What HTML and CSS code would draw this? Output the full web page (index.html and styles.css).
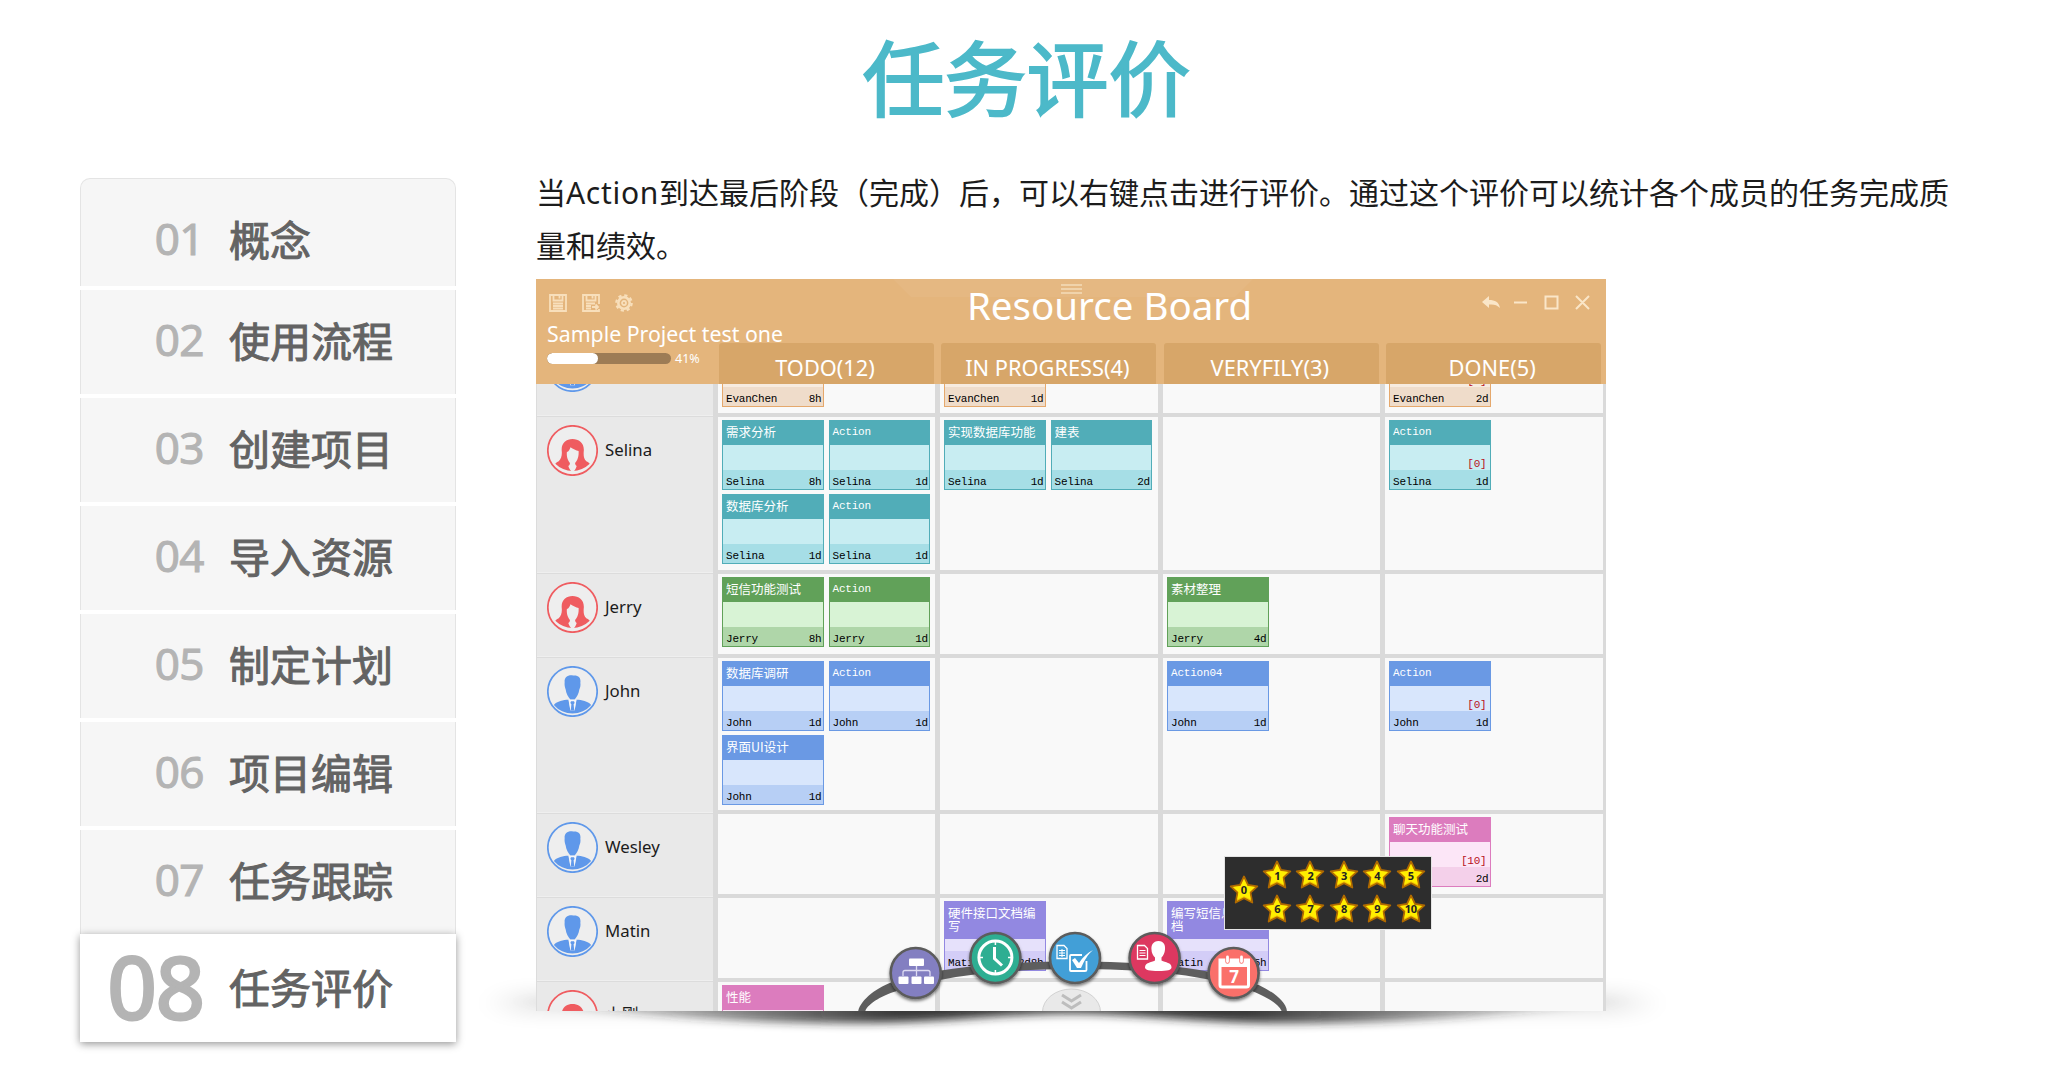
FILE: index.html
```html
<!DOCTYPE html>
<html lang="zh-CN">
<head>
<meta charset="utf-8">
<title>任务评价</title>
<link rel="stylesheet" href="styles.css">
</head>
<body>
<svg class="defs" width="0" height="0" aria-hidden="true">
  <symbol id="man" viewBox="0 0 50 50">
    <circle cx="25" cy="25" r="24.2" fill="#eeeeee" stroke="#5f98ea" stroke-width="1.7"/>
    <path d="M17.300 16C16.800 11 20.500 8.600 25.500 9.300c4.500-.6 8.200 1.700 7.200 7.200.5 3-.4 5-1 6.500-.5 4-2.600 7.500-4.600 9.800h-4.200c-2-2.300-4.100-5.800-4.600-9.800-.8-2-1.300-4.500-1-7z" fill="#5f98ea"/>
    <path d="M21 33.200l1.900 10.300 1.300-6-1.200-2h4l-1.200 2 1.300 6L29 33.200c5 .2 11 1.300 14.300 5A24 24 0 0 1 6.700 38.200C10 34.500 16 33.400 21 33.200z" fill="#5f98ea"/>
    <path d="M21.300 33.200l1.700 10.500h4l1.700-10.500z" fill="#f4f6fa"/>
    <path d="M23.500 34.500h3l.6 1.700-1 1.300.6 6.200h-3.400l.6-6.200-1-1.300z" fill="#5f98ea"/>
  </symbol>
  <symbol id="woman" viewBox="0 0 50 50">
    <circle cx="25" cy="25" r="24.200" fill="#eeeeee" stroke="#ef5c60" stroke-width="1.700"/>
    <path d="M14.500 26C13.500 18 18.500 13.700 25 13.700S37 18 36 26c-.3 4 .2 8 2.500 9.500 1.500.4 2.500 1.200 3.400 2.600A24 24 0 0 1 8.100 38.100c1-1.400 2-2.200 3.400-2.600 2.500-2.500 3.300-5.500 3-9.500z" fill="#ef5c60"/>
    <path d="M19.500 26.500c1.700-.5 3-2.500 3.500-4.700 2.500 1.700 5.500 3.200 8 3.700.3 5-1 9.500-3.500 11.700.2 1.600.7 2.300 1.600 3-.7 2.600-2.300 5.300-4 6.300-1.700-1-3.500-3.700-4.200-6.300 1-.7 1.500-1.400 1.600-3-2.200-2.200-3.500-6.700-3-10.700z" fill="#eeeeee"/>
  </symbol>
  <symbol id="star" viewBox="0 0 30 30">
    <path d="M15 1.500l4 8.500 9.300 1.300-6.800 6.400 1.800 9.800L15 23.300l-8.300 4.200 1.800-9.800-6.800-6.400L11 10z" fill="#f3c500" stroke="#b06a00" stroke-width="1.800" stroke-linejoin="round"/>
    <path d="M15 4l3.400 7 7.400 1-5.300 5 1.200 7.600-6.700-3.400-6.700 3.400L9.500 17l-5.300-5 7.400-1z" fill="#ffee00"/>
  </symbol>
</svg>

<h1 class="title">任务评价</h1>

<div class="page">
  <nav class="menu">
    <div class="item"><span class="num">01</span><span>概念</span></div>
    <div class="item"><span class="num">02</span><span>使用流程</span></div>
    <div class="item"><span class="num">03</span><span>创建项目</span></div>
    <div class="item"><span class="num">04</span><span>导入资源</span></div>
    <div class="item"><span class="num">05</span><span>制定计划</span></div>
    <div class="item"><span class="num">06</span><span>项目编辑</span></div>
    <div class="item"><span class="num">07</span><span>任务跟踪</span></div>
    <div class="item active"><span class="num">08</span><span>任务评价</span></div>
  </nav>

  <main class="content">
    <p class="intro">当<span class="latin">Action</span>到达最后阶段<span class="paren">（</span>完成<span class="paren">）</span>后，可以右键点击进行评价。通过这个评价可以统计各个成员的任务完成质量和绩效。</p>

    <div class="stage">
      <svg class="shadow" width="1230" height="110" viewBox="460 950 1230 110">
        <defs>
          <filter id="soft" x="-10%" y="-60%" width="120%" height="220%"><feGaussianBlur stdDeviation="14 4.500"/></filter>
          <filter id="faint" x="-20%" y="-100%" width="140%" height="300%"><feGaussianBlur stdDeviation="20 9"/></filter>
          <linearGradient id="fade"><stop offset="0" stop-color="#333" stop-opacity=".04"/><stop offset=".34" stop-color="#222" stop-opacity=".9"/><stop offset=".66" stop-color="#222" stop-opacity=".9"/><stop offset="1" stop-color="#333" stop-opacity=".04"/></linearGradient>
        </defs>
        <path d="M510 992H1635V1014H510z" fill="#000" opacity=".09" filter="url(#faint)"/>
        <path d="M520 1000C640 1016 760 1025 880 1023 960 1021 1010 1013 1071 1013S1180 1021 1262 1023C1380 1025 1500 1016 1622 1000z" fill="url(#fade)" filter="url(#soft)"/>
      </svg>

      <section class="board">
        <header class="top">
          <svg class="notch" width="360" height="18" viewBox="0 0 360 18"><path d="M0 0H360L342 18H18z" fill="#fff" opacity=".05"/><path d="M168 6h21M168 10h21M168 14h21" stroke="#f3dcb9" stroke-width="1.300"/></svg>
          <div class="project">
            <div class="tools">
              <svg width="18" height="18" viewBox="0 0 18 18" fill="none" stroke="#f8dfbb" stroke-width="1.800"><path d="M1 1h16v16H1zM4.500 1v5.500h9V1M10.500 1.500v3M4 9.500h10M4 12h10M4 14.500h10"/></svg>
              <svg width="18" height="18" viewBox="0 0 18 18" fill="none" stroke="#f8dfbb" stroke-width="1.800"><path d="M17 10V1H1v16h16v-2M4.500 1v5.500h9V1M10.500 1.500v3M4 9.500h9M4 12h5M4 14.500h5M10 13h6M13.500 10.500L16 13l-2.500 2.500"/></svg>
              <svg width="18" height="18" viewBox="0 0 18 18" fill="none" stroke="#f8dfbb"><circle cx="9" cy="9" r="5.700" stroke-width="2.600"/><circle cx="9" cy="9" r="7.700" stroke-width="2.200" stroke-dasharray="3.200 2.850"/><circle cx="9" cy="9" r="2" stroke-width="1.800"/></svg>
            </div>
            <div class="name">Sample Project test one</div>
            <div class="progress"><span class="bar"><span class="fill" style="width:41%"></span></span><span class="pct">41%</span></div>
          </div>
          <h2 class="heading">Resource Board</h2>
          <svg class="winctl" width="110" height="18" viewBox="0 0 110 18" fill="none" stroke="#fae6c8" stroke-width="2"><path d="M0 8l7-6v4c6 0 10 2 11 8-3-3-6-4-11-3.500V14z" fill="#fae6c8" stroke="none"/><path d="M32 8.500h13M63.500 2.500h12v12h-12zM94 2l13 13M107 2L94 15"/></svg>
          <div class="tabs">
            <div class="tab">TODO(12)</div><div class="tab">IN PROGRESS(4)</div><div class="tab">VERYFILY(3)</div><div class="tab">DONE(5)</div>
          </div>
        </header>

        <div class="grid">
          <div class="who cut"><svg class="avatar"><use href="#man"/></svg></div>
          <div class="cell cut"><div class="card orange"><div class="body"></div><div class="foot"><span>EvanChen</span><span>8h</span></div></div></div>
          <div class="cell cut"><div class="card orange"><div class="body"></div><div class="foot"><span>EvanChen</span><span>1d</span></div></div></div>
          <div class="cell cut"></div>
          <div class="cell cut"><div class="card orange"><div class="body">[4]</div><div class="foot"><span>EvanChen</span><span>2d</span></div></div></div>

          <div class="who"><svg class="avatar"><use href="#woman"/></svg><span>Selina</span></div>
          <div class="cell">
            <div class="card teal"><div class="head zh">需求分析</div><div class="body"></div><div class="foot"><span>Selina</span><span>8h</span></div></div>
            <div class="card teal"><div class="head">Action</div><div class="body"></div><div class="foot"><span>Selina</span><span>1d</span></div></div>
            <div class="card teal"><div class="head zh">数据库分析</div><div class="body"></div><div class="foot"><span>Selina</span><span>1d</span></div></div>
            <div class="card teal"><div class="head">Action</div><div class="body"></div><div class="foot"><span>Selina</span><span>1d</span></div></div>
          </div>
          <div class="cell">
            <div class="card teal"><div class="head zh">实现数据库功能</div><div class="body"></div><div class="foot"><span>Selina</span><span>1d</span></div></div>
            <div class="card teal"><div class="head zh">建表</div><div class="body"></div><div class="foot"><span>Selina</span><span>2d</span></div></div>
          </div>
          <div class="cell"></div>
          <div class="cell"><div class="card teal"><div class="head">Action</div><div class="body">[0]</div><div class="foot"><span>Selina</span><span>1d</span></div></div></div>

          <div class="who"><svg class="avatar"><use href="#woman"/></svg><span>Jerry</span></div>
          <div class="cell">
            <div class="card green"><div class="head zh">短信功能测试</div><div class="body"></div><div class="foot"><span>Jerry</span><span>8h</span></div></div>
            <div class="card green"><div class="head">Action</div><div class="body"></div><div class="foot"><span>Jerry</span><span>1d</span></div></div>
          </div>
          <div class="cell"></div>
          <div class="cell"><div class="card green"><div class="head zh">素材整理</div><div class="body"></div><div class="foot"><span>Jerry</span><span>4d</span></div></div></div>
          <div class="cell"></div>

          <div class="who"><svg class="avatar"><use href="#man"/></svg><span>John</span></div>
          <div class="cell">
            <div class="card blue"><div class="head zh">数据库调研</div><div class="body"></div><div class="foot"><span>John</span><span>1d</span></div></div>
            <div class="card blue"><div class="head">Action</div><div class="body"></div><div class="foot"><span>John</span><span>1d</span></div></div>
            <div class="card blue"><div class="head zh">界面UI设计</div><div class="body"></div><div class="foot"><span>John</span><span>1d</span></div></div>
          </div>
          <div class="cell"></div>
          <div class="cell"><div class="card blue"><div class="head">Action04</div><div class="body"></div><div class="foot"><span>John</span><span>1d</span></div></div></div>
          <div class="cell"><div class="card blue"><div class="head">Action</div><div class="body">[0]</div><div class="foot"><span>John</span><span>1d</span></div></div></div>

          <div class="who"><svg class="avatar"><use href="#man"/></svg><span>Wesley</span></div>
          <div class="cell"></div>
          <div class="cell"></div>
          <div class="cell"></div>
          <div class="cell"><div class="card pink"><div class="head zh">聊天功能测试</div><div class="body">[10]</div><div class="foot"><span></span><span>2d</span></div></div></div>

          <div class="who"><svg class="avatar"><use href="#man"/></svg><span>Matin</span></div>
          <div class="cell"></div>
          <div class="cell"><div class="card violet tall"><div class="head zh">硬件接口文档编写</div><div class="body"></div><div class="foot"><span>Matin</span><span>2d8h</span></div></div></div>
          <div class="cell"><div class="card violet tall"><div class="head zh">编写短信息的文档</div><div class="body"></div><div class="foot"><span>Matin</span><span>5h</span></div></div></div>
          <div class="cell"></div>

          <div class="who"><svg class="avatar"><use href="#woman"/></svg><span>小刚</span></div>
          <div class="cell"><div class="card pink"><div class="head zh">性能</div><div class="body"></div><div class="foot"></div></div></div>
          <div class="cell"></div>
          <div class="cell"></div>
          <div class="cell"></div>
        </div>

        <svg class="dock" width="450" height="86" viewBox="850 925 450 86">
          <defs><filter id="drop" x="-30%" y="-30%" width="160%" height="160%"><feDropShadow dx="0" dy="2" stdDeviation="1.500" flood-color="#000" flood-opacity=".5"/></filter></defs>
          <ellipse cx="1071.500" cy="1012" rx="29" ry="23" fill="#e9e9e9" stroke="#d2d2d2"/>
          <path d="M1062 995l9.500 6 9.500-6M1062 1002l9.500 6 9.500-6" fill="none" stroke="#bdbdbd" stroke-width="3"/>
          <path d="M858 1012C860 1000 877 987 895 981 945 966 1010 961.500 1075 961.500S1195 966 1245 980C1266 986 1287 1000 1287 1012H1282C1279 1003 1262 994 1243 988 1195 973.500 1140 969 1075 969S950 974.500 900 990C882 995 867 1004 865 1012z" fill="#5e5e5e"/>
          <g stroke="#5b5b5b" stroke-width="2.600" filter="url(#drop)">
            <circle cx="915.700" cy="973" r="25" fill="#837fc1"/><circle cx="995.400" cy="958" r="25" fill="#2fae92"/><circle cx="1075" cy="958" r="25" fill="#429fd7"/><circle cx="1154.600" cy="958" r="25" fill="#dd3860"/><circle cx="1233.600" cy="973" r="25" fill="#fa706b"/>
          </g>
          <g fill="#fff"><rect x="909" y="958.500" width="15" height="7.500" rx="1"/><rect x="898.500" y="976.500" width="10" height="7.500" rx="1"/><rect x="911.500" y="976.500" width="10" height="7.500" rx="1"/><rect x="924" y="976.500" width="10" height="7.500" rx="1"/></g>
          <path d="M903 976v-3.500q0-2 2-2h23q2 0 2 2v3.500M916.500 966v10" fill="none" stroke="#dedcf2" stroke-width="1.300"/>
          <circle cx="995.400" cy="957.500" r="16.500" fill="none" stroke="#fff" stroke-width="3"/>
          <path d="M995.400 941v4M995.400 970v4M979 957.500h4M1008 957.500h4" stroke="#fff" stroke-width="1.500"/>
          <path d="M994.500 947v11.500l7.500 7" fill="none" stroke="#fff" stroke-width="3"/>
          <g fill="none" stroke="#fff"><path d="M1057 945.500h7l3 3v10h-10z" stroke-width="1.300"/><path d="M1059 950.500h6M1059 953h6M1059 955.500h6M1062 949v8" stroke-width="1"/><path d="M1082 955h-11q-1 0-1 1v14q0 1 1 1h14q1.500 0 1.500-1v-9" stroke-width="1.800"/></g>
          <path d="M1072 960l3-2 4 5c4-6 8-10 14-13-5 4-9 11-12 18h-4z" fill="#fff"/>
          <g fill="none" stroke="#fff"><path d="M1137.500 945.500h7l3 3v10.500h-10z" stroke-width="1.300"/><path d="M1139.500 950.500h6M1139.500 953h6M1139.500 955.500h6" stroke-width="1"/></g>
          <path d="M1158.500 941c5.500 0 7 4.500 6.500 8.500-.3 3.500-1.500 6-3.500 8v3c4 2 10 2 10 7 0 2.500-4 3.500-13 3.500s-13.500-1-13.500-3.500c0-5 6-5 10-7v-3c-2-2-3.500-4.500-3.500-8-.5-4 1.500-8.500 7-8.500z" fill="#fff"/>
          <path d="M1220 960h28.500v25q0 2-2 2H1222q-2 0-2-2z" fill="none" stroke="#fff" stroke-width="3"/><path d="M1219 959h31v8h-31z" fill="#fff"/><path d="M1227.500 957.500v4M1241.500 957.500v4" stroke="#fa706b" stroke-width="4.400" stroke-linecap="round"/><path d="M1227.500 957v4.500M1241.500 957v4.500" stroke="#fff" stroke-width="2.800" stroke-linecap="round"/>
          <text x="1234" y="983" text-anchor="middle" class="day">7</text>
        </svg>

        <div class="rating">
          <div class="star zero"><svg><use href="#star"/></svg><b>0</b></div>
          <div class="star"><svg><use href="#star"/></svg><b>1</b></div>
          <div class="star"><svg><use href="#star"/></svg><b>2</b></div>
          <div class="star"><svg><use href="#star"/></svg><b>3</b></div>
          <div class="star"><svg><use href="#star"/></svg><b>4</b></div>
          <div class="star"><svg><use href="#star"/></svg><b>5</b></div>
          <div class="star"><svg><use href="#star"/></svg><b>6</b></div>
          <div class="star"><svg><use href="#star"/></svg><b>7</b></div>
          <div class="star"><svg><use href="#star"/></svg><b>8</b></div>
          <div class="star"><svg><use href="#star"/></svg><b>9</b></div>
          <div class="star"><svg><use href="#star"/></svg><b>10</b></div>
        </div>
      </section>
    </div>
  </main>
</div>
</body>
</html>
```

FILE: styles.css
```css
* { box-sizing: border-box; }
body {
  margin: 0;
  width: 2048px;
  height: 1080px;
  overflow: hidden;
  background: #fff;
  font-family: "Noto Sans", "Noto Sans CJK SC", sans-serif;
}
.defs { display: block; height: 0; }
.title {
  margin: 0;
  height: 167px;
  padding: 15px 0 0 5px;
  text-align: center;
  font: 400 82px/120px "Noto Sans CJK SC", sans-serif;
  color: #4cb9c9;
  -webkit-text-stroke: 2px #4cb9c9;
}
.page { display: flex; gap: 80px; padding-left: 80px; }

.menu { width: 376px; padding-top: 11px; display: flex; flex-direction: column; gap: 4px; }
.item {
  height: 104px;
  padding-bottom: 6px;
  display: flex;
  align-items: center;
  border: solid #e4e4e4;
  border-width: 0 1px;
  background: #f6f6f6;
  color: #636363;
  font: 400 41px/1 "Noto Sans CJK SC", sans-serif;
  -webkit-text-stroke: 1px #636363;
}
.item:first-child { height: 108px; padding-top: 17px; border-top-width: 1px; border-radius: 10px 10px 0 0; }
.num {
  width: 148px;
  padding-right: 25px;
  text-align: right;
  color: #b4b4b4;
  font: 400 44px/1 "Noto Sans", sans-serif;
  letter-spacing: -.5px;
  -webkit-text-stroke: 1px #b4b4b4;
}
.item.active {
  height: 108px;
  margin-top: -4px;
  padding-bottom: 4px;
  background: #fff;
  border-color: #fff;
  box-shadow: 0 2px 8px rgba(0, 0, 0, .42);
}
.active .num { font-size: 86px; letter-spacing: -1px; -webkit-text-stroke: 3px #b4b4b4; }

.content { width: 1440px; }
.intro {
  margin: 0;
  height: 112px;
  font: 400 30px/53px "Noto Sans CJK SC", sans-serif;
  color: #1c1c1c;
  position: relative;
  top: -2px;
}
.latin { font-family: "Noto Sans", sans-serif; letter-spacing: .7px; line-height: 1; }
.paren { font-family: "Noto Sans CJK TC", sans-serif; line-height: 1; }

.stage { position: relative; width: 1070px; }
.shadow { position: absolute; left: -76px; top: 671px; }
.board { position: relative; width: 1070px; height: 732px; overflow: hidden; background: #dadada; }

.top {
  position: relative;
  height: 105px;
  display: grid;
  grid-template: 64px 41px / 183px 1fr 127px;
  background: #e4b57c;
  color: #fff;
}
.notch { position: absolute; left: 357px; top: 0; }
.project { grid-area: 1 / 1 / 3 / 2; padding: 15px 0 0 11px; white-space: nowrap; position: relative; z-index: 1; }
.tools { display: flex; gap: 15px; padding-left: 2px; height: 18px; }
.name { margin-top: 8px; font-size: 21.3px; line-height: 27px; }
.progress { display: flex; align-items: center; gap: 4px; height: 11px; margin-top: 6px; }
.bar { width: 124px; height: 11px; border-radius: 6px; background: #9d7c55; overflow: hidden; }
.fill { display: block; height: 100%; border-radius: 6px; background: #fff; }
.pct { font-size: 12.5px; line-height: 11px; }
.heading {
  grid-area: 1 / 2 / 2 / 3;
  justify-self: center;
  margin: 0 0 0 21px;
  font-size: 38.5px;
  font-weight: 400;
  line-height: 53px;
  white-space: nowrap;
}
.winctl { grid-area: 1 / 3 / 2 / 4; margin-top: 15px; margin-left: 3px; }
.tabs { grid-area: 2 / 2 / 3 / 4; display: grid; grid-template: 41px / repeat(4, 215px); gap: 7.4px; }
.tab {
  padding-right: 3px;
  border-radius: 3px 3px 0 0;
  background: #d7a669;
  text-align: center;
  font-size: 21.8px;
  line-height: 49px;
}

.grid {
  display: grid;
  grid-template: 29px 153px 80px 152px 80px 80px 29px / 177px 217px 218px 217px 218px;
  gap: 4px 5px;
}
.who {
  display: flex;
  align-items: flex-start;
  gap: 7px;
  margin-bottom: -4px;
  padding: 8px 0 0 11px;
  background: #e9e9e9;
  border: solid #dcdcdc;
  border-width: 0 0 1px 1px;
  box-shadow: inset 0 -1px #efefef;
  color: #1b1b1b;
  font-size: 16.8px;
  line-height: 49px;
  overflow: hidden;
}
.who.cut { align-items: flex-end; padding: 0 0 24px 11px; }
.avatar { width: 51px; height: 51px; margin-left: -1px; flex: none; }
.cell {
  display: flex;
  flex-wrap: wrap;
  align-content: flex-start;
  gap: 4px 5px;
  padding: 3px 0 0 4px;
  background: #f9f9f9;
  overflow: hidden;
}
.cell.cut { align-content: flex-end; padding: 0 0 6px 4px; }

.card {
  width: 101.5px;
  height: 70px;
  display: flex;
  flex-direction: column;
  border: 1px solid var(--head);
  background: var(--body);
  color: #000;
  font: 11px/12px "Liberation Mono", monospace;
  letter-spacing: -.2px;
}
.cut .card { height: 45px; border-top: 0; }
.head { height: 24px; padding: 5px 3px 0; background: var(--head); color: #fff; }
.head.zh { padding: 4px 0 0 3px; font: 12.5px/13px "Noto Sans CJK SC", sans-serif; letter-spacing: 0; }
.body { flex: 1; display: flex; align-items: flex-end; justify-content: flex-end; padding: 0 3px 0 0; color: #b8101c; }
.foot { height: 19px; display: flex; justify-content: space-between; align-items: center; padding: 4px 1px 0 3px; background: var(--foot); }
.tall .head { height: 37px; }
.orange { --head: #e5a86c; --body: #f7ebdf; --foot: #efdcca; }
.teal { --head: #51adb8; --body: #c8edf2; --foot: #a6dee6; }
.green { --head: #61a159; --body: #d8f3d5; --foot: #afd6a9; }
.blue { --head: #6a99e4; --body: #d8e6fc; --foot: #b7cff5; }
.pink { --head: #dc7cbe; --body: #fce6f7; --foot: #f4d0ea; }
.violet { --head: #9288e1; --body: #e6e1fb; --foot: #d3cdf7; }

.dock { position: absolute; left: 314px; top: 646px; }
.day { font: 700 17px "Open Sans", sans-serif; fill: #fff; }
.rating {
  position: absolute;
  left: 688px;
  top: 576.500px;
  width: 208px;
  height: 74px;
  display: grid;
  grid-template: repeat(2, 33.400px) / repeat(6, 33.400px);
  padding: 2px 2px 0;
  border: 1px solid #e4e4e4;
  background: #2d2d2d;
}
.star { position: relative; display: flex; align-items: center; justify-content: center; }
.star svg { width: 30px; height: 30px; }
.star b { position: absolute; inset: 0; text-align: center; font: 700 11px/33px "Noto Sans", sans-serif; letter-spacing: -.5px; color: #222; }
.zero { grid-row: 1 / 3; margin-top: -3px; }
.zero b { line-height: 68px; }
```
